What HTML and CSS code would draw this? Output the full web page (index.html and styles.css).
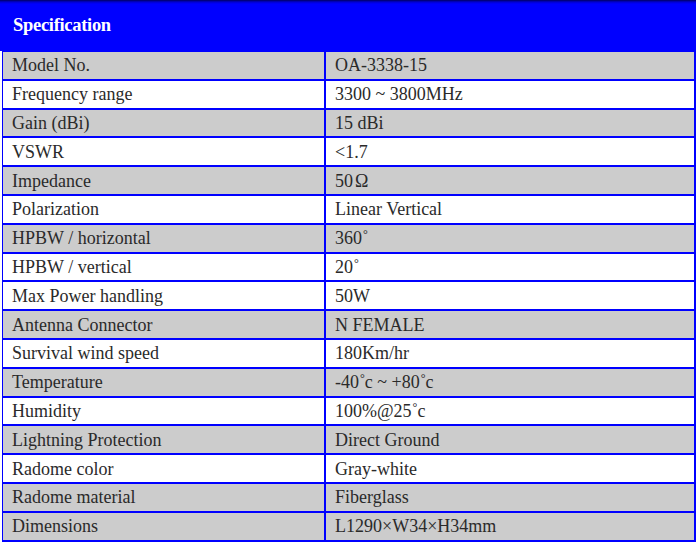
FILE: index.html
```html
<!DOCTYPE html>
<html>
<head>
<meta charset="utf-8">
<link rel="stylesheet" href="styles.css">
</head>
<body>
<div class="sheet">
  <div class="head">Specification</div>
  <table class="spec">
    <tr class="g"><td>Model No.</td><td>OA-3338-15</td></tr>
    <tr class="w"><td>Frequency range</td><td>3300 ~ 3800MHz</td></tr>
    <tr class="g"><td>Gain (dBi)</td><td>15 dBi</td></tr>
    <tr class="w"><td>VSWR</td><td>&lt;1.7</td></tr>
    <tr class="g"><td>Impedance</td><td>50<span class="om">Ω</span></td></tr>
    <tr class="w"><td>Polarization</td><td>Linear Vertical</td></tr>
    <tr class="g"><td>HPBW / horizontal</td><td>360<sup class="deg">°</sup></td></tr>
    <tr class="w"><td>HPBW / vertical</td><td>20<sup class="deg">°</sup></td></tr>
    <tr class="w"><td>Max Power handling</td><td>50W</td></tr>
    <tr class="g"><td>Antenna Connector</td><td>N FEMALE</td></tr>
    <tr class="w"><td>Survival wind speed</td><td>180Km/hr</td></tr>
    <tr class="g"><td>Temperature</td><td>-40<sup class="deg">°</sup>c ~ +80<sup class="deg">°</sup>c</td></tr>
    <tr class="w"><td>Humidity</td><td>100%@25<sup class="deg">°</sup>c</td></tr>
    <tr class="g"><td>Lightning Protection</td><td>Direct Ground</td></tr>
    <tr class="w"><td>Radome color</td><td>Gray-white</td></tr>
    <tr class="g"><td>Radome material</td><td>Fiberglass</td></tr>
    <tr class="g"><td>Dimensions</td><td>L1290×W34×H34mm</td></tr>
  </table>
</div>
</body>
</html>
```
FILE: styles.css
```css
html, body {
  margin: 0;
  padding: 0;
  background: #ffffff;
}
.sheet {
  width: 696px;
  font-family: "Liberation Serif", "Times New Roman", serif;
  color: #2a2a2a;
}
.head {
  height: 51px;
  box-sizing: border-box;
  background: linear-gradient(to bottom, #000060 0px, #0000d0 2px, #0000ff 4px, #0000ff 100%);
  color: #ffffff;
  font-size: 18.5px;
  font-weight: bold;
  padding: 15px 0 0 13px;
  letter-spacing: -0.3px;
}
.spec {
  margin-left: 2px;
  width: 694px;
  border-collapse: collapse;
  font-size: 18px;
}
.spec td {
  border: 2px solid #0000ff;
  height: 26.8px;
  padding: 0 0 0 9px;
  vertical-align: middle;
  line-height: 20px;
}
.spec tr:first-child td {
  border-top: 1px solid #0000ff;
}
.spec td:first-child {
  width: 312px;
  border-left: 1px solid #0000ff;
}
.g td { background: #cccccc; }
.w td { background: #ffffff; }
.deg {
  font-size: 12px;
  vertical-align: top;
  line-height: 10px;
  position: relative;
  top: 1px;
  margin-left: 1px;
}
.om { margin-left: 2px; }
```
